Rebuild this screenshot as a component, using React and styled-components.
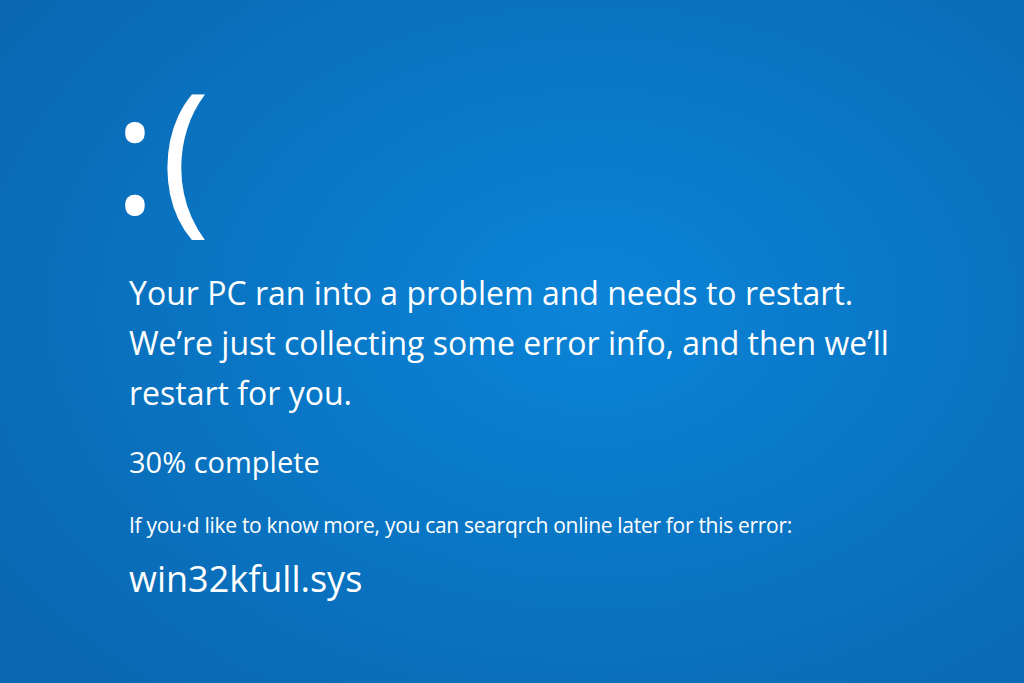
import React from 'react';
import styled, { createGlobalStyle } from 'styled-components';

const GlobalStyle = createGlobalStyle`
  html, body {
    margin: 0;
    padding: 0;
    height: 100%;
  }
  body {
    font-family: "Open Sans", "Noto Sans", sans-serif;
    color: #fff;
  }
  #root {
    height: 100%;
  }
`;

const Screen = styled.div`
  width: 1024px;
  height: 683px;
  overflow: hidden;
  box-sizing: border-box;
  padding: 66px 0 0 129px;
  display: flex;
  flex-direction: column;
  background: radial-gradient(
    ellipse 70% 75% at 58% 45%,
    #0c84d8 0%,
    #0977c6 45%,
    #0a68b2 100%
  );
`;

const Face = styled.div`
  margin-left: -16px;
  font-size: 167px;
  font-weight: 400;
  line-height: 1;
  height: 202px;
  letter-spacing: 4px;
`;

const Message = styled.p`
  margin: 0;
  font-size: 32px;
  line-height: 50px;
  max-width: 820px;
`;

const Progress = styled.p`
  margin: 26px 0 0;
  font-size: 29px;
  line-height: 35px;
`;

const Hint = styled.p`
  margin: 33px 0 0;
  font-size: 21px;
  line-height: 26px;
  letter-spacing: -0.3px;
`;

const StopCode = styled.p`
  margin: 18px 0 0;
  font-size: 36px;
  line-height: 45px;
`;

export default function App() {
  return (
    <>
      <GlobalStyle />
      <Screen>
        <Face>:(</Face>
        <Message>
          Your PC ran into a problem and needs to restart.
          <br />
          We’re just collecting some error info, and then we’ll
          <br />
          restart for you.
        </Message>
        <Progress>30% complete</Progress>
        <Hint>If you·d like to know more, you can searqrch online later for this error:</Hint>
        <StopCode>win32kfull.sys</StopCode>
      </Screen>
    </>
  );
}
